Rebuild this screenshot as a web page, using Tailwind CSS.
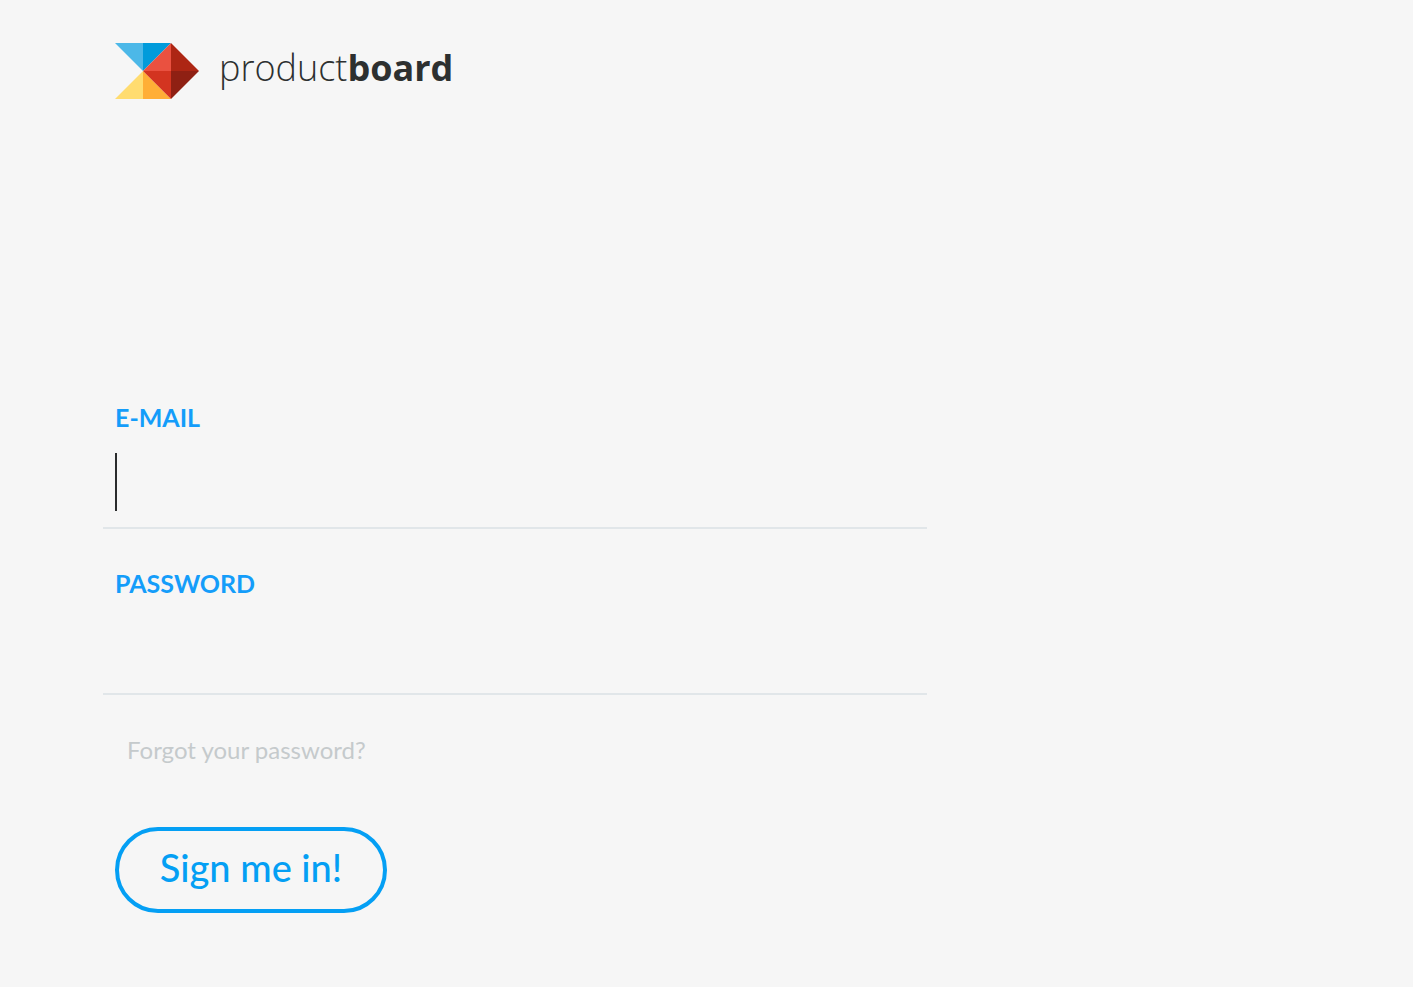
<!DOCTYPE html>
<html lang="en">
<head>
    <meta charset="UTF-8">
    <meta name="viewport" content="width=device-width, initial-scale=1.0">
    <title>productboard - Sign in</title>
    <script src="https://cdn.jsdelivr.net/npm/@tailwindcss/browser@4"></script>
</head>
<body class="min-h-screen bg-[#f6f6f6] font-['Lato',sans-serif] text-[#2d3030]">
    <div class="w-full max-w-[1030px] px-[103px] pt-[43px] pb-16">
        <header class="px-3">
            <a href="#" class="inline-flex items-center gap-5 align-top">
                <svg class="h-14 w-[84px]" viewBox="0 0 84 56" aria-hidden="true">
                    <path fill="#4cb8e8" d="M0 0h28v28z" />
                    <path fill="#009bdb" d="M28 0h28L28 28z" />
                    <path fill="#ffdc70" d="M0 56h28V28z" />
                    <path fill="#ffae36" d="M28 28v28h28z" />
                    <path fill="#ea5140" d="M56 0v28H28z" />
                    <path fill="#d33420" d="M28 28h28v28z" />
                    <path fill="#ad2614" d="M56 0l28 28H56z" />
                    <path fill="#8f2013" d="M56 28h28L56 56z" />
                </svg>
                <span class="pb-1.5 font-['Open_Sans',sans-serif] text-4xl leading-[50px] font-light">product<b class="font-bold">board</b></span>
            </a>
        </header>

        <form class="mt-[303px]">
            <div>
                <label for="email" class="block px-3 text-[25px] leading-[30px] font-bold text-[#149dfa]">E-MAIL</label>
                <div class="relative">
                    <input type="email" id="email" name="email"
                           class="block h-[97px] w-full border-b-2 border-[#e1e6e9] bg-transparent px-3 text-5xl caret-transparent outline-none">
                    <!-- text cursor -->
                    <span class="pointer-events-none absolute top-[21px] left-3 h-[58px] w-0.5 bg-[#2a2c2d]"></span>
                </div>
            </div>
            <div class="mt-[39px]">
                <label for="password" class="block px-3 text-[25px] leading-[30px] font-bold text-[#149dfa]">PASSWORD</label>
                <input type="password" id="password" name="password"
                       class="block h-[97px] w-full border-b-2 border-[#e1e6e9] bg-transparent px-3 text-5xl outline-none">
            </div>
            <div class="mt-10 px-6">
                <a href="#" class="block w-fit text-2xl leading-[30px] text-[#c5cacc] hover:text-[#149dfa]">Forgot your password?</a>
            </div>
            <div class="mt-[62px] px-3">
                <button type="submit"
                        class="block h-[86px] w-[272px] cursor-pointer rounded-full border-4 border-[#049ff4] pb-1.5 text-center text-[38px] leading-[48px] font-medium text-[#049ff4]">Sign me in!</button>
            </div>
        </form>
    </div>
</body>
</html>
